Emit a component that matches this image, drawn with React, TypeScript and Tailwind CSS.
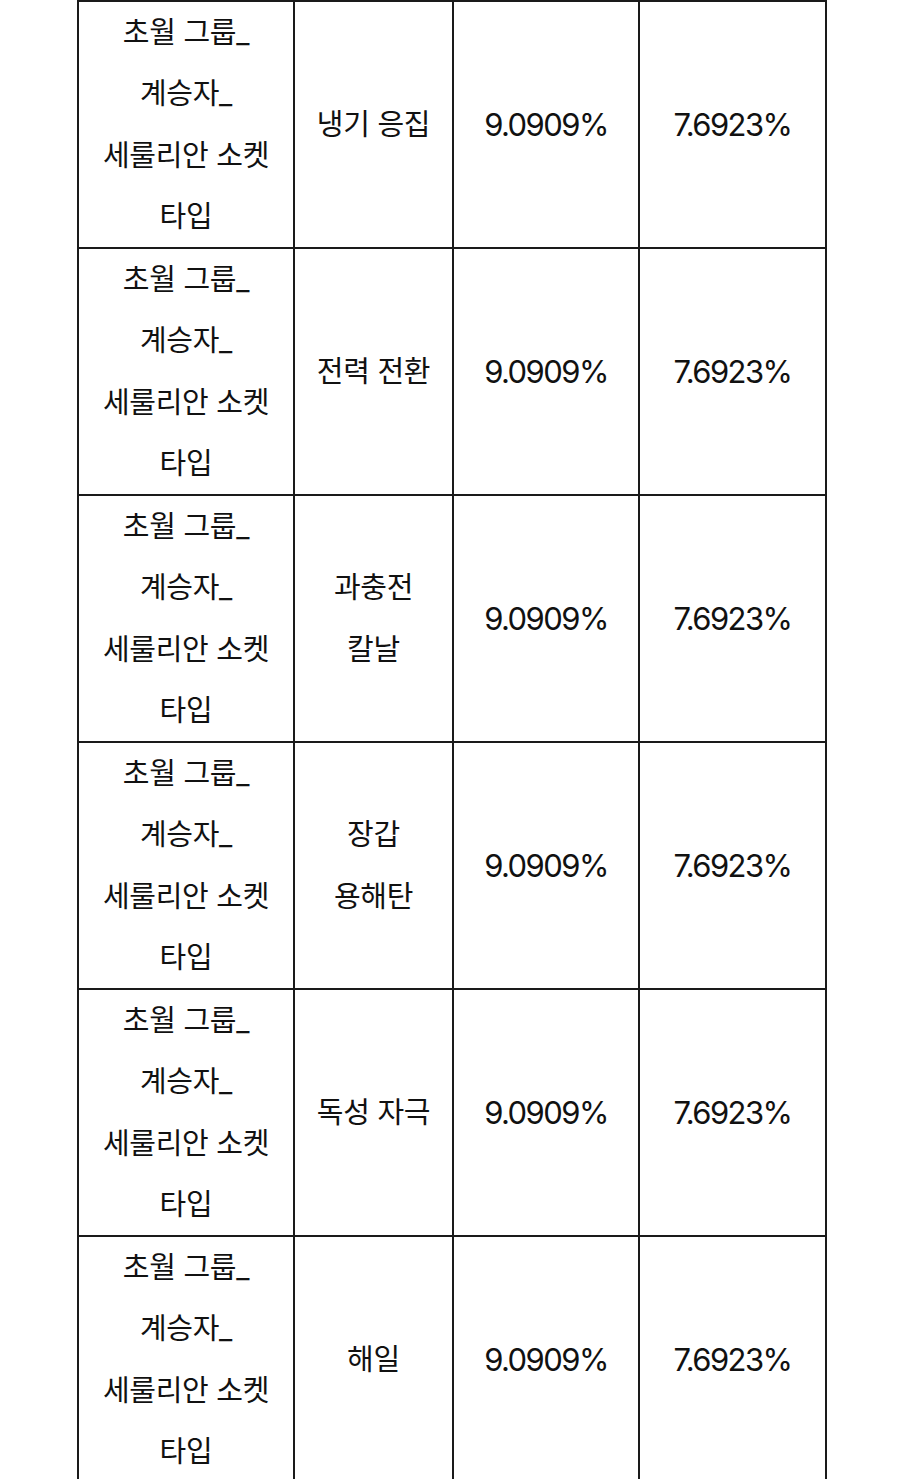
import React from "react";

const rows = [
  { name: ["냉기 응집"] },
  { name: ["전력 전환"] },
  { name: ["과충전", "칼날"] },
  { name: ["장갑", "용해탄"] },
  { name: ["독성 자극"] },
  { name: ["해일"] },
];

const cell = "border-2 border-[#1a1a1a] text-center align-middle p-0";
const num = "text-[31px] tracking-[-0.05em]";

const App: React.FC = () => {
  return (
    <div
      className="min-h-screen bg-white text-[#111] text-[29px] tracking-[-0.01em] leading-[61.25px]"
      style={{ fontFamily: '"Inter", "Noto Sans CJK KR", sans-serif' }}
    >
      <table className="ml-[77px] border-collapse table-fixed w-[750px]">
        <colgroup>
          <col className="w-[216px]" />
          <col className="w-[159px]" />
          <col className="w-[186px]" />
          <col className="w-[187px]" />
        </colgroup>
        <tbody>
          {rows.map((row, i) => (
            <tr key={i} className="h-[245px]">
              <td className={cell}>
                <div>초월 그룹_</div>
                <div>계승자_</div>
                <div>세룰리안 소켓</div>
                <div>타입</div>
              </td>
              <td className={cell}>
                {row.name.map((n) => (
                  <div key={n}>{n}</div>
                ))}
              </td>
              <td className={`${cell} ${num}`}>9.0909%</td>
              <td className={`${cell} ${num}`}>7.6923%</td>
            </tr>
          ))}
        </tbody>
      </table>
    </div>
  );
};

export default App;
